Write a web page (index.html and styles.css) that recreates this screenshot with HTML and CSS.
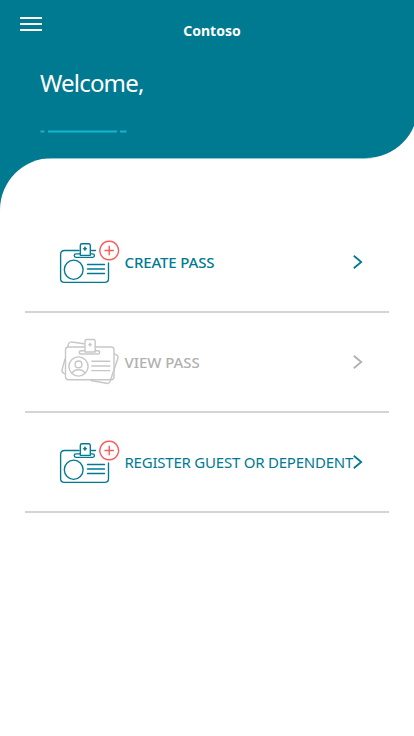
FILE: index.html
```html
<!DOCTYPE html>
<html lang="en">
<head>
<meta charset="utf-8">
<meta name="viewport" content="width=device-width, initial-scale=1">
<title>Contoso</title>
<link rel="stylesheet" href="styles.css">
</head>
<body>
<svg class="symbols" aria-hidden="true">
  <symbol id="create" viewBox="0 0 80 60">
    <g fill="none" stroke="#007a91" stroke-width="1.35" stroke-linecap="round" stroke-linejoin="round">
      <path d="M29 20.5H14.5Q10.6 20.5 10.6 24.5V48.5Q10.6 52.4 14.5 52.4H54.5Q58.5 52.4 58.5 48.5V33M41.5 20.5H45.5"/>
      <ellipse cx="23.7" cy="39.7" rx="9.4" ry="9.6"/>
      <path d="M37.5 34.5H54.5M37.5 39H54.5M37.5 43.5H54.5"/>
      <path d="M30 23.8H26Q24.2 23.8 24.2 25.6Q24.2 27.3 26 27.3H42.7Q44.4 27.3 44.4 25.6Q44.4 23.8 42.7 23.8H40.5"/>
      <path d="M30.3 25.3V15.5Q30.3 13.7 32 13.7H38.5Q40.3 13.7 40.3 15.5V25.3Z"/>
    </g>
    <path d="M35 16.6L35.7 18L37 18.7L35.7 19.4L35 20.8L34.3 19.4L33 18.7L34.3 18Z" fill="#007a91" stroke="#007a91" stroke-width=".6"/>
    <path d="M59.2 11.2a9.3 9.3 0 1 0 .01 0ZM59.2 15.8V25.2M54.5 20.5H63.9" fill="none" stroke="#fa5a5a" stroke-width="1.4"/>
  </symbol>
  <symbol id="view" viewBox="0 0 80 60">
    <g fill="none" stroke="#c7c7c7" stroke-width="1.4" stroke-linecap="round" stroke-linejoin="round">
      <path d="M17.5 17L18.4 14Q19.4 11.5 22 12L34 13.8M15 29L12 40Q11.6 42.3 14 43.3L15.5 43.8M64.5 24L67 25.2Q68.6 26.2 68 28L60 51.5Q59 54 56.3 53.3L41 50.5"/>
      <path d="M34 17H18.5Q15.5 17 15.5 20V46.8Q15.5 49.8 18.5 49.8H61Q64 49.8 64 46.8V20Q64 17 61 17H46"/>
      <path d="M34.5 20.8H31.3Q29.4 20.8 29.4 22.4Q29.4 24 31.3 24H47.8Q49.7 24 49.7 22.4Q49.7 20.8 47.8 20.8H45.3"/>
      <path d="M35 22V11.2Q35 9.5 36.7 9.5H43.5Q45.2 9.5 45.2 11.2V22Z"/>
      <circle cx="28.5" cy="36.5" r="9.6"/>
      <circle cx="28.5" cy="34.4" r="3.4"/>
      <path d="M22.3 43.3Q23.4 39.7 28.5 39.7Q33.6 39.7 34.7 43.3M41.8 31.3H59.8M41.8 36H59.8M41.8 40.6H59.8"/>
    </g>
    <path d="M40 12.5L40.7 13.9L42 14.6L40.7 15.3L40 16.7L39.3 15.3L38 14.6L39.3 13.9Z" fill="#c7c7c7" stroke="#c7c7c7" stroke-width=".5"/>
  </symbol>
</svg>
<header class="header">
  <div class="menu"><span></span><span></span><span></span></div>
  <h1 class="brand">Contoso</h1>
  <p class="welcome">Welcome,</p>
  <svg class="name-line" viewBox="0 0 88 4"><path d="M.5 2.4H4.3M8 2.4H77M80 2.4H86.5"/></svg>
</header>
<div class="backdrop">
  <main class="content">
    <a class="row">
      <svg class="icon"><use href="#create"/></svg>
      <span class="label label-create">CREATE PASS</span>
      <svg class="chevron" viewBox="0 0 12 16"><path d="M1.8 1.8L9.2 8L1.8 14.2"/></svg>
    </a>
    <a class="row disabled">
      <svg class="icon"><use href="#view"/></svg>
      <span class="label label-view">VIEW PASS</span>
      <svg class="chevron" viewBox="0 0 12 16"><path d="M1.8 1.8L9.2 8L1.8 14.2"/></svg>
    </a>
    <a class="row">
      <svg class="icon"><use href="#create"/></svg>
      <span class="label label-register">REGISTER GUEST OR DEPENDENT</span>
      <svg class="chevron" viewBox="0 0 12 16"><path d="M1.8 1.8L9.2 8L1.8 14.2"/></svg>
    </a>
  </main>
</div>
</body>
</html>
```
FILE: styles.css
```css
* { box-sizing: border-box; }
body {
  margin: 0;
  height: 736px;
  overflow: hidden;
  background: #fff;
  font-family: "Noto Sans", "Open Sans", sans-serif;
}
.symbols { display: none; }
.header {
  display: grid;
  grid-template-columns: 40px 1fr 44px;
  grid-template-rows: 61px 44px auto;
  width: 418px;
  height: 158px;
  background: #007a91;
  border-bottom-right-radius: 52px;
  color: #fff;
}
.menu {
  display: flex;
  flex-direction: column;
  gap: 4px;
  width: 22px;
  margin: 17px 0 0 20px;
}
.menu span { height: 2px; background: #fff; }
.brand {
  margin: 21px 0 0 4px;
  padding-left: 6px;
  font-size: 14px;
  line-height: 20px;
  font-weight: 700;
  text-align: center;
}
.welcome {
  grid-column: 2 / 4;
  margin: 5px 0 0;
  font-size: 24px;
  line-height: 34px;
  letter-spacing: -0.8px;
}
.name-line {
  grid-column: 2 / 4;
  width: 88px;
  height: 4px;
  margin-top: 24px;
  fill: none;
  stroke: #16b4cf;
  stroke-width: 2;
}
.backdrop {
  background: linear-gradient(to right, #007a91 60px, #fff 60px);
}
.content {
  height: 578px;
  padding: 55px 25px 0;
  background: linear-gradient(to right, #8cc3ce 364px, #fff 374px) top / 100% 1px no-repeat #fff;
  border-top-left-radius: 52px;
}
.row {
  display: flex;
  align-items: center;
  height: 100px;
  padding-left: 25px;
  border-bottom: 2px solid #d2d5d5;
  color: #007a91;
}
.icon { flex: none; width: 80px; height: 60px; margin-top: -4px; }
.label {
  width: 227px;
  margin-left: -5.5px;
  font-size: 15px;
  line-height: 20px;
  white-space: nowrap;
}
.label-create { font-weight: 500; letter-spacing: -0.15px; }
.label-view { font-weight: 500; letter-spacing: -0.05px; }
.label-register { letter-spacing: -0.22px; }
.chevron {
  flex: none;
  width: 12px;
  height: 16px;
  margin-top: -1px;
  fill: none;
  stroke: currentColor;
  stroke-width: 1.8;
}
.disabled { color: #b0b0b0; }
```
